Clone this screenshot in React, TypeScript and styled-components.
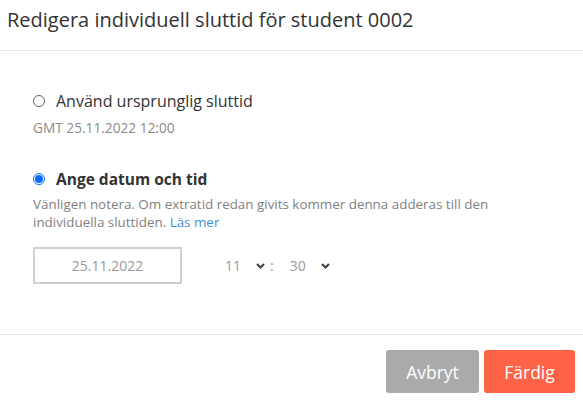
import React from "react";
import styled, { createGlobalStyle } from "styled-components";

const Global = createGlobalStyle`
  html, body { margin: 0; padding: 0; background: #fff; }
  body { font-family: "Open Sans", "Noto Sans", sans-serif; color: #333; }
  * { box-sizing: border-box; }
`;

const Dialog = styled.div`
  width: 583px;
  height: 402px;
  display: flex;
  flex-direction: column;
  background: #fff;
`;

const Header = styled.div`
  height: 51px;
  padding: 4px 7px 0;
  border-bottom: 1px solid #e5e5e5;
`;

const Title = styled.h1`
  margin: 0;
  font-size: 20px;
  font-weight: 400;
  color: #333;
  line-height: 31px;
`;

const Body = styled.div`
  height: 284px;
  padding: 39px 33px 0;
  border-bottom: 1px solid #e5e5e5;
`;

const Option = styled.div<{ $gap?: number }>`
  margin-top: ${(p) => p.$gap ?? 0}px;
`;

const RadioRow = styled.label`
  display: flex;
  align-items: center;
  height: 22px;
  cursor: pointer;
`;

const RadioCircle = styled.span<{ $checked: boolean }>`
  width: 12px;
  height: 12px;
  border-radius: 50%;
  border: 1px solid ${(p) => (p.$checked ? "#0a6cff" : "#666")};
  display: flex;
  align-items: center;
  justify-content: center;
  flex: none;
  margin-right: 11px;
  &::after {
    content: "";
    width: 8px;
    height: 8px;
    border-radius: 50%;
    background: ${(p) => (p.$checked ? "#0a6cff" : "transparent")};
  }
`;

const RadioLabel = styled.span<{ $bold?: boolean }>`
  font-size: ${(p) => (p.$bold ? 15.5 : 16)}px;
  font-weight: ${(p) => (p.$bold ? 700 : 400)};
  color: #333;
`;

const Sub = styled.div`
  font-size: 13.7px;
  line-height: 18px;
  color: #8a8a8a;
  margin-top: 7px;
`;

const Help = styled.p`
  margin: 5px 0 0;
  font-size: 13.4px;
  line-height: 18px;
  color: #7f7f7f;
  max-width: 470px;
`;

const Link = styled.a`
  color: #3f8fd2;
  text-decoration: none;
`;

const Fields = styled.div`
  display: flex;
  align-items: center;
  margin-top: 16px;
`;

const DateBox = styled.div`
  width: 149px;
  height: 37px;
  border: 2px solid #cfcfcf;
  display: flex;
  align-items: center;
  justify-content: center;
  font-size: 14px;
  color: #999;
`;

const Time = styled.div`
  display: flex;
  align-items: center;
  margin-left: 39px;
  font-size: 14px;
  color: #9a9a9a;
`;

const Select = styled.div`
  display: flex;
  align-items: center;
  gap: 15px;
  padding: 0 4px;
`;

const Colon = styled.span`
  margin: 0 12px 0 1px;
`;

const Footer = styled.div`
  flex: 1;
  display: flex;
  justify-content: flex-end;
  align-items: flex-start;
  gap: 5px;
  padding: 15px 8px 0 0;
`;

const Button = styled.button<{ $primary?: boolean }>`
  width: ${(p) => (p.$primary ? 91 : 93)}px;
  height: 43px;
  border: none;
  border-radius: 3px;
  background: ${(p) => (p.$primary ? "#ff6347" : "#aaaaaa")};
  color: #fff;
  font-family: inherit;
  font-size: 17.5px;
  cursor: pointer;
`;

const Chevron = () => (
  <svg width="9" height="6" viewBox="0 0 9 6">
    <path d="M1 1 L4.5 4.5 L8 1" fill="none" stroke="#444" strokeWidth="2.2" />
  </svg>
);

export default function App() {
  return (
    <Dialog>
      <Global />
      <Header>
        <Title>Redigera individuell sluttid för student 0002</Title>
      </Header>
      <Body>
        <Option>
          <RadioRow>
            <RadioCircle $checked={false} />
            <RadioLabel>Använd ursprunglig sluttid</RadioLabel>
          </RadioRow>
          <Sub>GMT 25.11.2022 12:00</Sub>
        </Option>
        <Option $gap={31}>
          <RadioRow>
            <RadioCircle $checked />
            <RadioLabel $bold>Ange datum och tid</RadioLabel>
          </RadioRow>
          <Help>
            Vänligen notera. Om extratid redan givits kommer denna adderas till den individuella
            sluttiden. <Link href="#">Läs mer</Link>
          </Help>
          <Fields>
            <DateBox>25.11.2022</DateBox>
            <Time>
              <Select>
                <span>11</span>
                <Chevron />
              </Select>
              <Colon>:</Colon>
              <Select>
                <span>30</span>
                <Chevron />
              </Select>
            </Time>
          </Fields>
        </Option>
      </Body>
      <Footer>
        <Button>Avbryt</Button>
        <Button $primary>Färdig</Button>
      </Footer>
    </Dialog>
  );
}
